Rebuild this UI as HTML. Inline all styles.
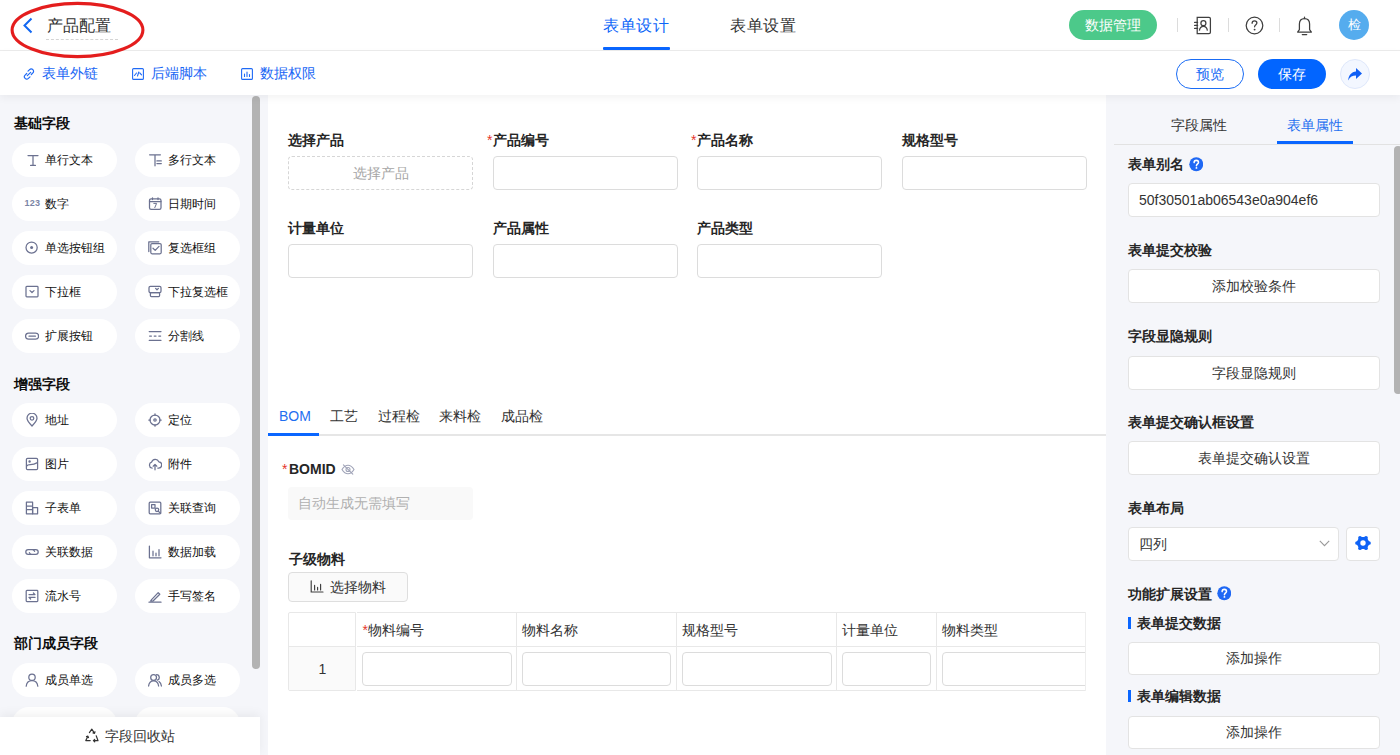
<!DOCTYPE html>
<html><head><meta charset="utf-8">
<style>
*{box-sizing:border-box;margin:0;padding:0}
html,body{width:1400px;height:755px;overflow:hidden;background:#fff}
body{position:relative;font-family:"Liberation Sans",sans-serif;color:#333;font-size:14px;line-height:20px}
.abs{position:absolute}
#header{position:absolute;left:0;top:0;width:1400px;height:51px;border-bottom:1px solid #ececec;background:#fff}
#toolbar{position:absolute;left:0;top:51px;width:1400px;height:44px;background:#fff;z-index:5;box-shadow:0 3px 8px rgba(0,0,0,0.05)}
#left{position:absolute;left:0;top:95px;width:268px;height:660px;background:#f5f6fa;overflow:hidden}
#canvas{position:absolute;left:268px;top:95px;width:838px;height:660px;background:#fff;overflow:hidden}
#right{position:absolute;left:1106px;top:95px;width:294px;height:660px;background:#f5f6fa;overflow:hidden}
.t{position:absolute;white-space:nowrap}
.b{font-weight:bold}
/* header */
.htab{position:absolute;top:15px;font-size:16px;line-height:22px;color:#333;letter-spacing:0.6px}
.sep{position:absolute;top:18px;width:1px;height:14px;background:#dcdcdc}
.btnpill{position:absolute;height:30px;border-radius:15px;text-align:center;line-height:30px;font-size:14px}
/* left panel */
.sec{position:absolute;left:14px;font-weight:bold;font-size:14px;color:#0d0d0d;line-height:20px}
.pill{position:absolute;width:105px;height:34px;border-radius:17px;background:#fff}
.pill .ic{position:absolute;left:13px;top:10px;width:14px;height:14px}
.pill .lb{position:absolute;left:33px;top:7px;font-size:12px;line-height:20px;color:#111;white-space:nowrap}
/* canvas */
.flabel{position:absolute;font-weight:bold;font-size:14px;line-height:20px;color:#262626;white-space:nowrap}
.req{color:#e5352b;font-weight:normal}
.inp{position:absolute;height:34px;border:1px solid #dcdcdc;border-radius:4px;background:#fff}
/* right */
.rh{position:absolute;left:22px;font-weight:bold;font-size:14px;line-height:20px;color:#262626;white-space:nowrap}
.rbtn{position:absolute;left:22px;width:252px;height:34px;border:1px solid #e3e3e3;border-radius:4px;background:#fff;text-align:center;line-height:32px;font-size:14px;color:#333}
</style></head>
<body>
<div id="header">
  <!-- back chevron -->
  <svg class="abs" style="left:22px;top:17px" width="12" height="17" viewBox="0 0 12 17"><path d="M9.5 1.5 L2.5 8.5 L9.5 15.5" fill="none" stroke="#1167f2" stroke-width="2"/></svg>
  <div class="t" style="left:47px;top:15px;font-size:16px;line-height:22px;color:#333">产品配置</div>
  <div class="abs" style="left:46px;top:39px;width:72px;height:0;border-top:1px dashed #d4d4d4"></div>
  <div class="htab" style="left:603px;color:#0d66f8">表单设计</div>
  <div class="abs" style="left:603px;top:47px;width:67px;height:3px;background:#0a66ff;border-radius:1px"></div>
  <div class="htab" style="left:730px">表单设置</div>
  <div class="btnpill" style="left:1069px;top:10px;width:88px;background:#4cc98a;color:#fff">数据管理</div>
  <svg class="abs" style="left:1192px;top:16px" width="20" height="19" viewBox="0 0 20 19"><g fill="none" stroke="#3f3f3f" stroke-width="1.25"><path d="M5.2 1.4 H17 A1.4 1.4 0 0 1 18.4 2.8 V16.2 A1.4 1.4 0 0 1 17 17.6 H5.2 Z"/><circle cx="11.4" cy="7.2" r="2.5"/><path d="M7.4 14.6 C7.8 11.6 9.4 10.4 11.4 10.4 C13.4 10.4 15 11.6 15.4 14.6"/><path d="M2.6 6.4 H5.6 M2.6 9.4 H5.6 M2.6 12.4 H5.6" stroke-linecap="round"/></g></svg>
  <svg class="abs" style="left:1245px;top:16px" width="19" height="19" viewBox="0 0 19 19"><g fill="none" stroke="#3f3f3f" stroke-width="1.25"><circle cx="9.5" cy="9.5" r="8.3"/><path d="M7.1 7.3 C7.1 5.8 8.2 4.9 9.5 4.9 C10.9 4.9 11.9 5.8 11.9 7.1 C11.9 8.6 9.6 8.9 9.6 10.8" stroke-linecap="round"/></g><circle cx="9.6" cy="13.6" r="0.95" fill="#3f3f3f"/></svg>
  <svg class="abs" style="left:1296px;top:16px" width="17" height="20" viewBox="0 0 17 20"><g fill="none" stroke="#3f3f3f" stroke-width="1.25" stroke-linejoin="round"><path d="M8.5 2.6 C5.2 2.6 3.4 5 3.4 8 V13.6 L1.6 16 H15.4 L13.6 13.6 V8 C13.6 5 11.8 2.6 8.5 2.6 Z"/><path d="M6.3 18.6 H10.7" stroke-linecap="round"/><path d="M8.5 1 V2.6" stroke-linecap="round"/></g></svg>
  <div class="sep" style="left:1177px"></div>
  <div class="sep" style="left:1228px"></div>
  <div class="sep" style="left:1279px"></div>
  <div class="abs" style="left:1339px;top:10px;width:30px;height:30px;border-radius:50%;background:#55acee;color:#fff;text-align:center;line-height:30px;font-size:13px">检</div>
</div>
<div id="toolbar">
  <svg class="abs" style="left:23px;top:17px" width="12" height="12" viewBox="0 0 12 12"><g fill="none" stroke="#1f6af5" stroke-width="1.2" stroke-linecap="round"><path d="M5 3.2 L6.6 1.6 a2.3 2.3 0 0 1 3.3 3.3 L8.3 6.5"/><path d="M7 8.8 L5.4 10.4 a2.3 2.3 0 0 1 -3.3 -3.3 L3.7 5.5"/><path d="M4.3 7.7 L7.7 4.3"/></g></svg>
  <div class="t" style="left:42px;top:12px;font-size:14px;line-height:20px;color:#1765f5">表单外链</div>
  <svg class="abs" style="left:132px;top:17px" width="12" height="12" viewBox="0 0 12 12"><g fill="none" stroke="#1f6af5" stroke-width="1.1"><rect x="0.6" y="0.6" width="10.8" height="10.8" rx="1"/><path d="M2.5 7.5 L4.5 5 M5.5 8 L6.8 4 M7.8 5 L9.6 6.8" stroke-linecap="round"/></g></svg>
  <div class="t" style="left:151px;top:12px;font-size:14px;line-height:20px;color:#1765f5">后端脚本</div>
  <svg class="abs" style="left:241px;top:17px" width="12" height="12" viewBox="0 0 12 12"><g fill="none" stroke="#1f6af5" stroke-width="1.1"><rect x="0.6" y="0.6" width="10.8" height="10.8" rx="1"/><path d="M3.5 8.5 V6 M6 8.5 V4 M8.5 8.5 V6.5" stroke-linecap="round"/></g></svg>
  <div class="t" style="left:260px;top:12px;font-size:14px;line-height:20px;color:#1765f5">数据权限</div>
  <div class="btnpill" style="left:1176px;top:8px;width:68px;border:1px solid #1a6cf5;color:#1a6cf5;line-height:28px">预览</div>
  <div class="btnpill" style="left:1258px;top:8px;width:68px;background:#0265ff;color:#fff">保存</div>
  <div class="abs" style="left:1340px;top:8px;width:30px;height:30px;border-radius:50%;background:#f3f7ff;border:1px solid #dfe8fb"></div>
  <svg class="abs" style="left:1347px;top:16px" width="16" height="14" viewBox="0 0 16 14"><path d="M9 1 L15 6.5 L9 12 V8.6 C5.5 8.6 3 9.8 1.2 13.4 C1.4 8.2 4.5 4.8 9 4.4 Z" fill="#0f5ff5"/></svg>
</div>
<div id="left">
  <div class="sec" style="top:18px">基础字段</div>
  <div class="pill" style="left:12px;top:48px"><svg class="ic" width="14" height="14" viewBox="0 0 14 14"><g fill="none" stroke="#6b7190" stroke-width="1.25" stroke-linecap="round" stroke-linejoin="round"><path d="M3 2.5 H13 M8 2.5 V12.4 M5.6 12.4 H10.4"/></g></svg><div class="lb">单行文本</div></div>
  <div class="pill" style="left:135px;top:48px"><svg class="ic" width="14" height="14" viewBox="0 0 14 14"><g fill="none" stroke="#6b7190" stroke-width="1.25" stroke-linecap="round" stroke-linejoin="round"><path d="M1.6 1.8 H12.4 M7 1.8 V12.8 M8.9 7.9 H13.3 M8.9 10.5 H13.3"/></g></svg><div class="lb">多行文本</div></div>
  <div class="pill" style="left:12px;top:92px"><div class="abs" style="left:12.5px;top:9.5px;font-family:'Liberation Sans',sans-serif;font-weight:bold;font-size:9px;line-height:12px;color:#7a84a6;letter-spacing:0.3px">123</div><div class="lb">数字</div></div>
  <div class="pill" style="left:135px;top:92px"><svg class="ic" width="14" height="14" viewBox="0 0 14 14"><g fill="none" stroke="#6b7190" stroke-width="1.25" stroke-linecap="round" stroke-linejoin="round"><rect x="1.5" y="1.8" width="11.5" height="10.6" rx="1.6"/><path d="M1.5 4.5 H13 M4.5 0.8 V2.6 M10 0.8 V2.6"/><path d="M5.8 6.4 H8.6 L6.8 10.6" stroke-width="1"/></g></svg><div class="lb">日期时间</div></div>
  <div class="pill" style="left:12px;top:136px"><svg class="ic" width="14" height="14" viewBox="0 0 14 14"><circle cx="6.6" cy="6.6" r="5.6" fill="none" stroke="#6b7190" stroke-width="1.25" stroke-linecap="round" stroke-linejoin="round"/><circle cx="6.6" cy="6.6" r="1.5" fill="#6b7190"/></svg><div class="lb">单选按钮组</div></div>
  <div class="pill" style="left:135px;top:136px"><svg class="ic" width="14" height="14" viewBox="0 0 14 14"><g fill="none" stroke="#6b7190" stroke-width="1.25" stroke-linecap="round" stroke-linejoin="round"><path d="M0.8 10.6 V0.8 H10.8"/><rect x="2.8" y="2.6" width="10.4" height="10.2" rx="1.2"/><path d="M5 7.2 L7.2 9.4 L11 5.4"/></g></svg><div class="lb">复选框组</div></div>
  <div class="pill" style="left:12px;top:180px"><svg class="ic" width="14" height="14" viewBox="0 0 14 14"><g fill="none" stroke="#6b7190" stroke-width="1.25" stroke-linecap="round" stroke-linejoin="round"><rect x="1" y="1.4" width="12" height="10.4" rx="0.8"/><path d="M5 5.6 L7 7.5 L9 5.6"/></g></svg><div class="lb">下拉框</div></div>
  <div class="pill" style="left:135px;top:180px"><svg class="ic" width="14" height="14" viewBox="0 0 14 14"><g fill="none" stroke="#6b7190" stroke-width="1.25" stroke-linecap="round" stroke-linejoin="round"><rect x="1" y="1.4" width="12" height="6.2" rx="1.4"/><rect x="2.4" y="7.6" width="9.2" height="4" rx="1"/><path d="M7.6 3.4 L9 4.8 L10.4 3.4"/></g></svg><div class="lb">下拉复选框</div></div>
  <div class="pill" style="left:12px;top:224px"><svg class="ic" width="14" height="14" viewBox="0 0 14 14"><g fill="none" stroke="#6b7190" stroke-width="1.25" stroke-linecap="round" stroke-linejoin="round"><rect x="0.6" y="4.2" width="13" height="6" rx="3"/><path d="M4 7.2 H10.4"/></g></svg><div class="lb">扩展按钮</div></div>
  <div class="pill" style="left:135px;top:224px"><svg class="ic" width="14" height="14" viewBox="0 0 14 14"><g fill="none" stroke="#6b7190" stroke-width="1.25" stroke-linecap="round" stroke-linejoin="round"><path d="M1.2 2.6 H13 M1.2 11.3 H13"/><path d="M1.6 7 H3.4 M6.2 7 H8 M10.8 7 H12.6"/></g></svg><div class="lb">分割线</div></div>
  <div class="sec" style="top:279px">增强字段</div>
  <div class="pill" style="left:12px;top:308px"><svg class="ic" width="14" height="14" viewBox="0 0 14 14"><g fill="none" stroke="#6b7190" stroke-width="1.25" stroke-linecap="round" stroke-linejoin="round"><path d="M7 13 C4 9.8 2 7.4 2 5.2 A5 5 0 0 1 12 5.2 C12 7.4 10 9.8 7 13 Z"/><circle cx="7" cy="5.3" r="1.8"/></g></svg><div class="lb">地址</div></div>
  <div class="pill" style="left:135px;top:308px"><svg class="ic" width="14" height="14" viewBox="0 0 14 14"><g fill="none" stroke="#6b7190" stroke-width="1.25" stroke-linecap="round" stroke-linejoin="round"><circle cx="7" cy="7" r="5"/><circle cx="7" cy="7" r="1.2"/><path d="M7 0.8 V2.4 M7 11.6 V13.2 M0.8 7 H2.4 M11.6 7 H13.2"/></g></svg><div class="lb">定位</div></div>
  <div class="pill" style="left:12px;top:352px"><svg class="ic" width="14" height="14" viewBox="0 0 14 14"><g fill="none" stroke="#6b7190" stroke-width="1.25" stroke-linecap="round" stroke-linejoin="round"><rect x="1.4" y="1.4" width="11.2" height="11.2" rx="1.2"/><path d="M1.6 9 C4 6 6 9.5 12.4 5.6"/><circle cx="4.6" cy="4.4" r="0.6" fill="#6b7190"/></g></svg><div class="lb">图片</div></div>
  <div class="pill" style="left:135px;top:352px"><svg class="ic" width="14" height="14" viewBox="0 0 14 14"><g fill="none" stroke="#6b7190" stroke-width="1.25" stroke-linecap="round" stroke-linejoin="round"><path d="M4.2 11 H3.8 A3 3 0 0 1 3.6 5.2 A3.8 3.8 0 0 1 10.8 4.8 A3.1 3.1 0 0 1 10.4 11 H9.8"/><path d="M7 12.8 V7.6 M5.2 9.2 L7 7.4 L8.8 9.2"/></g></svg><div class="lb">附件</div></div>
  <div class="pill" style="left:12px;top:396px"><svg class="ic" width="14" height="14" viewBox="0 0 14 14"><g fill="none" stroke="#6b7190" stroke-width="1.25" stroke-linecap="round" stroke-linejoin="round"><path d="M7.6 12.8 H1.4 V1.2 H7.6 V12.8 M1.4 5 H7.6 M1.4 8.6 H7.6"/><rect x="7.6" y="6.6" width="5" height="6.2"/></g></svg><div class="lb">子表单</div></div>
  <div class="pill" style="left:135px;top:396px"><svg class="ic" width="14" height="14" viewBox="0 0 14 14"><g fill="none" stroke="#6b7190" stroke-width="1.25" stroke-linecap="round" stroke-linejoin="round"><rect x="1.2" y="1.2" width="11.6" height="11.6" rx="1"/><rect x="3.6" y="3.6" width="3.4" height="3.4"/><circle cx="9" cy="8.8" r="1.7"/><path d="M10.3 10.2 L12.6 12.4"/></g></svg><div class="lb">关联查询</div></div>
  <div class="pill" style="left:12px;top:440px"><svg class="ic" width="14" height="14" viewBox="0 0 14 14"><g fill="none" stroke="#6b7190" stroke-width="1.25" stroke-linecap="round" stroke-linejoin="round"><path d="M6 9.4 H3.2 A2.4 2.4 0 0 1 3.2 4.6 H7.6 A2.4 2.4 0 0 1 9.6 6.4"/><path d="M8 4.6 H10.8 A2.4 2.4 0 0 1 10.8 9.4 H6.4 A2.4 2.4 0 0 1 4.4 7.6"/></g></svg><div class="lb">关联数据</div></div>
  <div class="pill" style="left:135px;top:440px"><svg class="ic" width="14" height="14" viewBox="0 0 14 14"><g fill="none" stroke="#6b7190" stroke-width="1.25" stroke-linecap="round" stroke-linejoin="round"><path d="M1.4 1 V12.8 H13 M5 10.8 V6.2 M8 10.8 V8 M11 10.8 V4.6"/></g></svg><div class="lb">数据加载</div></div>
  <div class="pill" style="left:12px;top:484px"><svg class="ic" width="14" height="14" viewBox="0 0 14 14"><g fill="none" stroke="#6b7190" stroke-width="1.25" stroke-linecap="round" stroke-linejoin="round"><rect x="1.2" y="1.4" width="11.6" height="11.2" rx="0.8"/><path d="M4 5.6 H10 M4 8.4 H10 M8.4 4 L10 5.6 M5.6 10 L4 8.4"/></g></svg><div class="lb">流水号</div></div>
  <div class="pill" style="left:135px;top:484px"><svg class="ic" width="14" height="14" viewBox="0 0 14 14"><g fill="none" stroke="#6b7190" stroke-width="1.25" stroke-linecap="round" stroke-linejoin="round"><path d="M3.6 10.6 L10.2 3.6 L11.8 5.2 L5 12 H2.6 Z" /><path d="M1 13.2 H13"/></g></svg><div class="lb">手写签名</div></div>
  <div class="sec" style="top:538px">部门成员字段</div>
  <div class="pill" style="left:12px;top:568px"><svg class="ic" width="14" height="14" viewBox="0 0 14 14"><g fill="none" stroke="#6b7190" stroke-width="1.25" stroke-linecap="round" stroke-linejoin="round"><circle cx="7" cy="4.2" r="3.2"/><path d="M1.2 13.2 C1.6 9.4 4 7.6 7 7.6 C10 7.6 12.4 9.4 12.8 13.2"/></g></svg><div class="lb">成员单选</div></div>
  <div class="pill" style="left:135px;top:568px"><svg class="ic" width="14" height="14" viewBox="0 0 14 14"><g fill="none" stroke="#6b7190" stroke-width="1.25" stroke-linecap="round" stroke-linejoin="round"><circle cx="5.6" cy="4.4" r="2.9"/><path d="M0.6 13 C1 9.4 3 7.8 5.6 7.8 C8.2 7.8 10.2 9.4 10.6 13"/><path d="M8.6 1.6 A2.9 2.9 0 0 1 9.4 7.2 M11 8.6 C12.4 9.6 13.2 11 13.4 13"/></g></svg><div class="lb">成员多选</div></div>
  <div class="pill" style="left:12px;top:612px"></div>
  <div class="pill" style="left:135px;top:612px"></div>
  <div class="abs" style="left:252px;top:1px;width:8px;height:573px;border-radius:4px;background:#b3b3b3"></div>
  <div class="abs" style="left:0;top:622px;width:260px;height:38px;background:#fff;box-shadow:0 -3px 10px rgba(0,0,0,0.06)"><svg class="abs" style="left:84px;top:11px" width="16" height="15" viewBox="0 0 16 15"><g fill="none" stroke="#333" stroke-width="1.2" stroke-linecap="round" stroke-linejoin="round"><path d="M5.4 4.6 L7.8 1.2 L10.4 5.2 M9 4.9 L10.5 5.3 L11 3.8"/><path d="M12.2 7.8 L14 12.6 H9.4 M10.7 11.4 L9.4 12.6 L10.7 13.8"/><path d="M6.2 12.6 H1.8 L3.9 8.2 M2.5 8.6 L3.9 8.2 L4.5 9.6"/></g></svg><div class="t" style="left:105px;top:8.5px;font-size:14px;line-height:20px;color:#333">字段回收站</div></div>
</div>
<div id="canvas">
  <div class="flabel" style="left:20px;top:35.0px">选择产品</div>
  <div class="inp" style="left:20px;top:61px;width:185px;border:1px dashed #d6d6d6;text-align:center;line-height:32px;color:#a6a6a6;font-size:14px">选择产品</div>
  <div class="flabel" style="left:225px;top:35.0px"><span class="req" style="position:absolute;left:-6px;top:0">*</span>产品编号</div>
  <div class="inp" style="left:225px;top:61px;width:185px"></div>
  <div class="flabel" style="left:429px;top:35.0px"><span class="req" style="position:absolute;left:-6px;top:0">*</span>产品名称</div>
  <div class="inp" style="left:429px;top:61px;width:185px"></div>
  <div class="flabel" style="left:634px;top:35.0px">规格型号</div>
  <div class="inp" style="left:634px;top:61px;width:185px"></div>
  <div class="flabel" style="left:20px;top:123.0px">计量单位</div>
  <div class="inp" style="left:20px;top:149px;width:185px"></div>
  <div class="flabel" style="left:225px;top:123.0px">产品属性</div>
  <div class="inp" style="left:225px;top:149px;width:185px"></div>
  <div class="flabel" style="left:429px;top:123.0px">产品类型</div>
  <div class="inp" style="left:429px;top:149px;width:185px"></div>
  <div class="abs" style="left:0;top:339px;width:838px;height:2px;background:#e6e6e6"></div>
  <div class="abs" style="left:0;top:337.5px;width:51px;height:3px;background:#0a66ff"></div>
  <div class="t" style="left:11px;top:311px;font-size:14px;line-height:20px;color:#1f6ff0">BOM</div>
  <div class="t" style="left:61.7px;top:311px;font-size:14px;line-height:20px;color:#333">工艺</div>
  <div class="t" style="left:109.5px;top:311px;font-size:14px;line-height:20px;color:#333">过程检</div>
  <div class="t" style="left:171px;top:311px;font-size:14px;line-height:20px;color:#333">来料检</div>
  <div class="t" style="left:232.7px;top:311px;font-size:14px;line-height:20px;color:#333">成品检</div>
  <div class="flabel" style="left:21px;top:364.0px"><span class="req" style="position:absolute;left:-7px;top:0">*</span>BOMID</div>
  <svg class="abs" style="left:73px;top:369px" width="14" height="11" viewBox="0 0 14 11"><g fill="none" stroke="#a0a4b8" stroke-width="1.1" stroke-linecap="round"><path d="M1 5.5 C3 2.2 5 1.2 7 1.2 C9 1.2 11 2.2 13 5.5 C11 8.8 9 9.8 7 9.8 C5 9.8 3 8.8 1 5.5 Z"/><circle cx="7" cy="5.5" r="2"/><path d="M2.4 0.8 L11.8 10.2"/></g></svg>
  <div class="abs" style="left:20px;top:391.5px;width:185px;height:33px;background:#f9f9f9;border-radius:4px"></div>
  <div class="t" style="left:29.5px;top:398px;font-size:14px;line-height:20px;color:#b0b0b0">自动生成无需填写</div>
  <div class="flabel" style="left:20.5px;top:454.0px">子级物料</div>
  <div class="abs" style="left:20px;top:477px;width:120px;height:30px;border:1px solid #dedede;border-radius:4px;background:#fafafa"></div>
  <svg class="abs" style="left:42px;top:485px" width="14" height="13" viewBox="0 0 14 13"><g fill="none" stroke="#3d3d3d" stroke-width="1.15" stroke-linecap="round"><path d="M1.2 0.8 V12 H13 M4.6 10 V5.4 M7.6 10 V7.4 M10.6 10 V4.4"/></g></svg>
  <div class="t" style="left:61.5px;top:482px;font-size:14px;line-height:20px;color:#333">选择物料</div>
  <div class="abs" style="left:20px;top:517px;width:68px;height:78.5px;border:1px solid #e8e8e8;border-radius:2px 0 0 2px"></div>
  <div class="abs" style="left:21px;top:551px;width:66px;height:43.5px;background:#fafafa;border-top:1px solid #e8e8e8"></div>
  <div class="t" style="left:50.5px;top:563.5px;font-size:14px;line-height:20px;color:#333">1</div>
  <div class="abs" style="left:89px;top:517px;width:729px;height:78.5px;border:1px solid #e8e8e8;border-left:none;border-right:none"></div>
  <div class="abs" style="left:89px;top:551px;width:729px;height:1px;background:#e8e8e8"></div>
  <div class="abs" style="left:248px;top:517px;width:1px;height:78.5px;background:#e8e8e8"></div>
  <div class="abs" style="left:408px;top:517px;width:1px;height:78.5px;background:#e8e8e8"></div>
  <div class="abs" style="left:568px;top:517px;width:1px;height:78.5px;background:#e8e8e8"></div>
  <div class="abs" style="left:668px;top:517px;width:1px;height:78.5px;background:#e8e8e8"></div>
  <div class="t" style="left:100.4px;top:524.5px;font-size:14px;line-height:20px;color:#333"><span style="position:absolute;left:-6px;top:0;color:#e5352b">*</span>物料编号</div>
  <div class="inp" style="left:94px;top:557.3px;width:150px;height:33.8px"></div>
  <div class="t" style="left:254px;top:524.5px;font-size:14px;line-height:20px;color:#333">物料名称</div>
  <div class="inp" style="left:254px;top:557.3px;width:149px;height:33.8px"></div>
  <div class="t" style="left:413.7px;top:524.5px;font-size:14px;line-height:20px;color:#333">规格型号</div>
  <div class="inp" style="left:414px;top:557.3px;width:150px;height:33.8px"></div>
  <div class="t" style="left:574px;top:524.5px;font-size:14px;line-height:20px;color:#333">计量单位</div>
  <div class="inp" style="left:574px;top:557.3px;width:89.3px;height:33.8px"></div>
  <div class="t" style="left:674px;top:524.5px;font-size:14px;line-height:20px;color:#333">物料类型</div>
  <div class="inp" style="left:674px;top:557.3px;width:160px;height:33.8px"></div>
  <div class="abs" style="left:817px;top:515px;width:21px;height:90px;background:#fff"></div><div class="abs" style="left:817px;top:517px;width:1px;height:78.5px;background:#eeeeee"></div>
</div>
<div id="right">
  <div class="t" style="left:65.4px;top:19.5px;font-size:14px;line-height:20px;color:#333">字段属性</div>
  <div class="t" style="left:181px;top:19.5px;font-size:14px;line-height:20px;color:#1f6ff0">表单属性</div>
  <div class="abs" style="left:8px;top:49px;width:286px;height:1px;background:#e2e2e2"></div>
  <div class="abs" style="left:171px;top:46px;width:76px;height:3px;background:#0a66ff"></div>
  <div class="abs" style="left:288px;top:51px;width:8px;height:248px;border-radius:4px;background:#b3b3b3"></div>
  <div class="rh" style="top:58.5px">表单别名</div><svg class="abs" style="left:82.5px;top:62px" width="14.5" height="14.5" viewBox="0 0 15 15"><circle cx="7.5" cy="7.5" r="7.2" fill="#1f68f4"/><path d="M5.3 5.8 C5.3 4.4 6.3 3.5 7.6 3.5 C8.9 3.5 9.8 4.4 9.8 5.6 C9.8 7.1 7.7 7.3 7.7 9.1" fill="none" stroke="#fff" stroke-width="1.6" stroke-linecap="round"/><circle cx="7.7" cy="11.3" r="0.95" fill="#fff"/></svg>
  <div class="abs" style="left:22px;top:88px;width:252px;height:34px;border:1px solid #e3e3e3;border-radius:4px;background:#fff"></div>
  <div class="t" style="left:33px;top:94.5px;font-size:14px;line-height:20px;color:#333">50f30501ab06543e0a904ef6</div>
  <div class="rh" style="top:144.5px">表单提交校验</div>
  <div class="rbtn" style="top:174px">添加校验条件</div>
  <div class="rh" style="top:230.5px">字段显隐规则</div>
  <div class="rbtn" style="top:260.5px">字段显隐规则</div>
  <div class="rh" style="top:316.5px">表单提交确认框设置</div>
  <div class="rbtn" style="top:346px">表单提交确认设置</div>
  <div class="rh" style="top:403.0px">表单布局</div>
  <div class="abs" style="left:22px;top:432px;width:211px;height:33.5px;border:1px solid #e3e3e3;border-radius:4px;background:#fff"></div>
  <div class="t" style="left:33px;top:438.5px;font-size:14px;line-height:20px;color:#333">四列</div>
  <svg class="abs" style="left:213px;top:445px" width="11" height="7" viewBox="0 0 11 7"><path d="M0.8 0.8 L5.5 5.6 L10.2 0.8" fill="none" stroke="#999" stroke-width="1.1"/></svg>
  <div class="abs" style="left:240px;top:432px;width:34px;height:33.5px;border:1px solid #e3e3e3;border-radius:4px;background:#fff"></div>
  <svg class="abs" style="left:249px;top:440px" width="16" height="16" viewBox="0 0 16 16"><path d="M14.00 8.00 L11.00 13.20 L5.00 13.20 L2.00 8.00 L5.00 2.80 L11.00 2.80 Z" fill="#0f63f6" stroke="#0f63f6" stroke-width="1.6" stroke-linejoin="round"/><circle cx="14.00" cy="8.00" r="1.85" fill="#0f63f6"/><circle cx="11.00" cy="13.20" r="1.85" fill="#0f63f6"/><circle cx="5.00" cy="13.20" r="1.85" fill="#0f63f6"/><circle cx="2.00" cy="8.00" r="1.85" fill="#0f63f6"/><circle cx="5.00" cy="2.80" r="1.85" fill="#0f63f6"/><circle cx="11.00" cy="2.80" r="1.85" fill="#0f63f6"/><circle cx="8" cy="8" r="2.7" fill="#fff"/></svg>
  <div class="rh" style="top:488.5px">功能扩展设置</div><svg class="abs" style="left:110.5px;top:491px" width="14.5" height="14.5" viewBox="0 0 15 15"><circle cx="7.5" cy="7.5" r="7.2" fill="#1f68f4"/><path d="M5.3 5.8 C5.3 4.4 6.3 3.5 7.6 3.5 C8.9 3.5 9.8 4.4 9.8 5.6 C9.8 7.1 7.7 7.3 7.7 9.1" fill="none" stroke="#fff" stroke-width="1.6" stroke-linecap="round"/><circle cx="7.7" cy="11.3" r="0.95" fill="#fff"/></svg>
  <div class="abs" style="left:22px;top:521.7px;width:3px;height:12px;background:#0a66ff"></div>
  <div class="rh" style="left:31px;top:517.5px">表单提交数据</div>
  <div class="rbtn" style="top:547.3px;height:33px;line-height:31px">添加操作</div>
  <div class="abs" style="left:22px;top:594.7px;width:3px;height:12px;background:#0a66ff"></div>
  <div class="rh" style="left:31px;top:590.5px">表单编辑数据</div>
  <div class="rbtn" style="top:620.7px;height:33px;line-height:31px">添加操作</div>
</div>
<!-- red annotation ellipse -->
<svg class="abs" style="left:0;top:0;z-index:20" width="160" height="62" viewBox="0 0 160 62"><ellipse cx="77.5" cy="30" rx="65.4" ry="26.6" fill="none" stroke="#e41d1d" stroke-width="3.1"/></svg>
</body></html>
